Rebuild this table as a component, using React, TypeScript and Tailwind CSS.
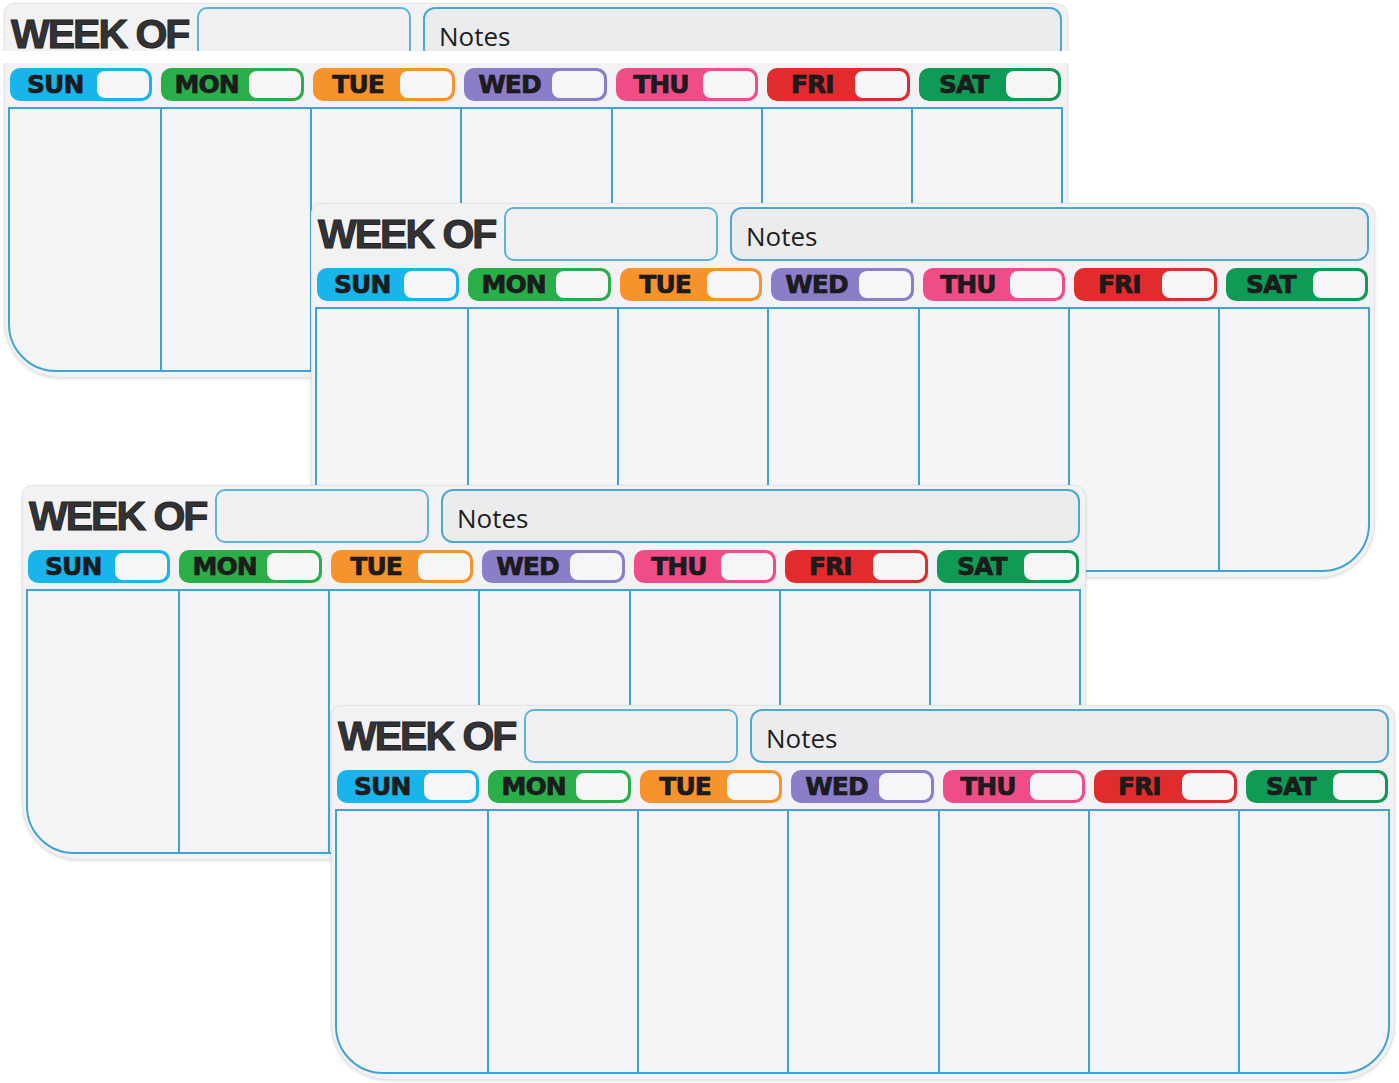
const days = [
  { label: "SUN", color: "bg-[#19b5ea]" },
  { label: "MON", color: "bg-[#2aae4a]" },
  { label: "TUE", color: "bg-[#f6932c]" },
  { label: "WED", color: "bg-[#8b7dc8]" },
  { label: "THU", color: "bg-[#f04d88]" },
  { label: "FRI", color: "bg-[#e22b2d]" },
  { label: "SAT", color: "bg-[#0f9a55]" },
];

function Board({ torn }: { torn?: boolean }) {
  return (
    <div className="relative w-[1064px] h-[375px] bg-[#f2f2f4] rounded-tl-[10px] rounded-tr-[12px] rounded-b-[56px] border border-[#e4e4e6] shadow-[0_1px_3px_rgba(0,0,0,0.12)] flex flex-col">
      {/* Header */}
      <div className="flex items-stretch h-[54px] mt-[3px] pl-[6px] pr-[5px]">
        <div className="w-[178px] flex items-end pb-[6px]">
          <span className="font-['Liberation_Sans',sans-serif] font-bold text-[41px] leading-none tracking-[-2px] text-[#333336] [-webkit-text-stroke:1px_#232325]">
            WEEK OF
          </span>
        </div>
        <div className="ml-[8px] w-[214px] rounded-[10px] border-2 border-[#5eb3d8] bg-[#f0f0f2]" />
        <div className="ml-[12px] flex-1 rounded-[12px] border-2 border-[#4ea6d2] bg-[#ececee] flex items-center pl-[14px] pt-[4px]">
          <span className="font-['Open_Sans',sans-serif] text-[26px] text-[#1e1e20]">Notes</span>
        </div>
      </div>

      {/* Day labels */}
      <div className="grid grid-cols-7 gap-[9px] h-[33px] mt-[7px] pl-[5px] pr-[6px]">
        {days.map((d) => (
          <div key={d.label} className={`${d.color} rounded-[10px] p-[3px] flex items-stretch`}>
            <div className="flex-1 flex items-center justify-center">
              <span className="font-['DejaVu_Sans',sans-serif] font-bold text-[25px] leading-none tracking-[-1px] text-[#1c1c1e] [-webkit-text-stroke:0.6px_#111]">
                {d.label}
              </span>
            </div>
            <div className="w-[52px] rounded-[8px] bg-[#f6f6f8]" />
          </div>
        ))}
      </div>

      {/* Week grid */}
      <div className="mt-[6px] ml-[3px] mr-[4px] h-[265px] grid grid-cols-7 border-2 border-[#3fa3d3] rounded-bl-[48px] rounded-br-[48px] bg-[#f5f5f7] overflow-hidden">
        {days.map((d, i) => (
          <div key={d.label} className={i === 0 ? "" : "border-l-2 border-[#3fa3d3]"} />
        ))}
      </div>

      {torn && <div className="absolute -left-[4px] -right-[4px] top-[47px] h-[12px] bg-white" />}
    </div>
  );
}

export default function App() {
  return (
    <div className="relative w-[1399px] h-[1083px] bg-white overflow-hidden">
      <div className="absolute left-[4px] top-[3px]">
        <Board torn />
      </div>
      <div className="absolute left-[311px] top-[203px]">
        <Board />
      </div>
      <div className="absolute left-[22px] top-[485px]">
        <Board />
      </div>
      <div className="absolute left-[331px] top-[705px]">
        <Board />
      </div>
    </div>
  );
}
